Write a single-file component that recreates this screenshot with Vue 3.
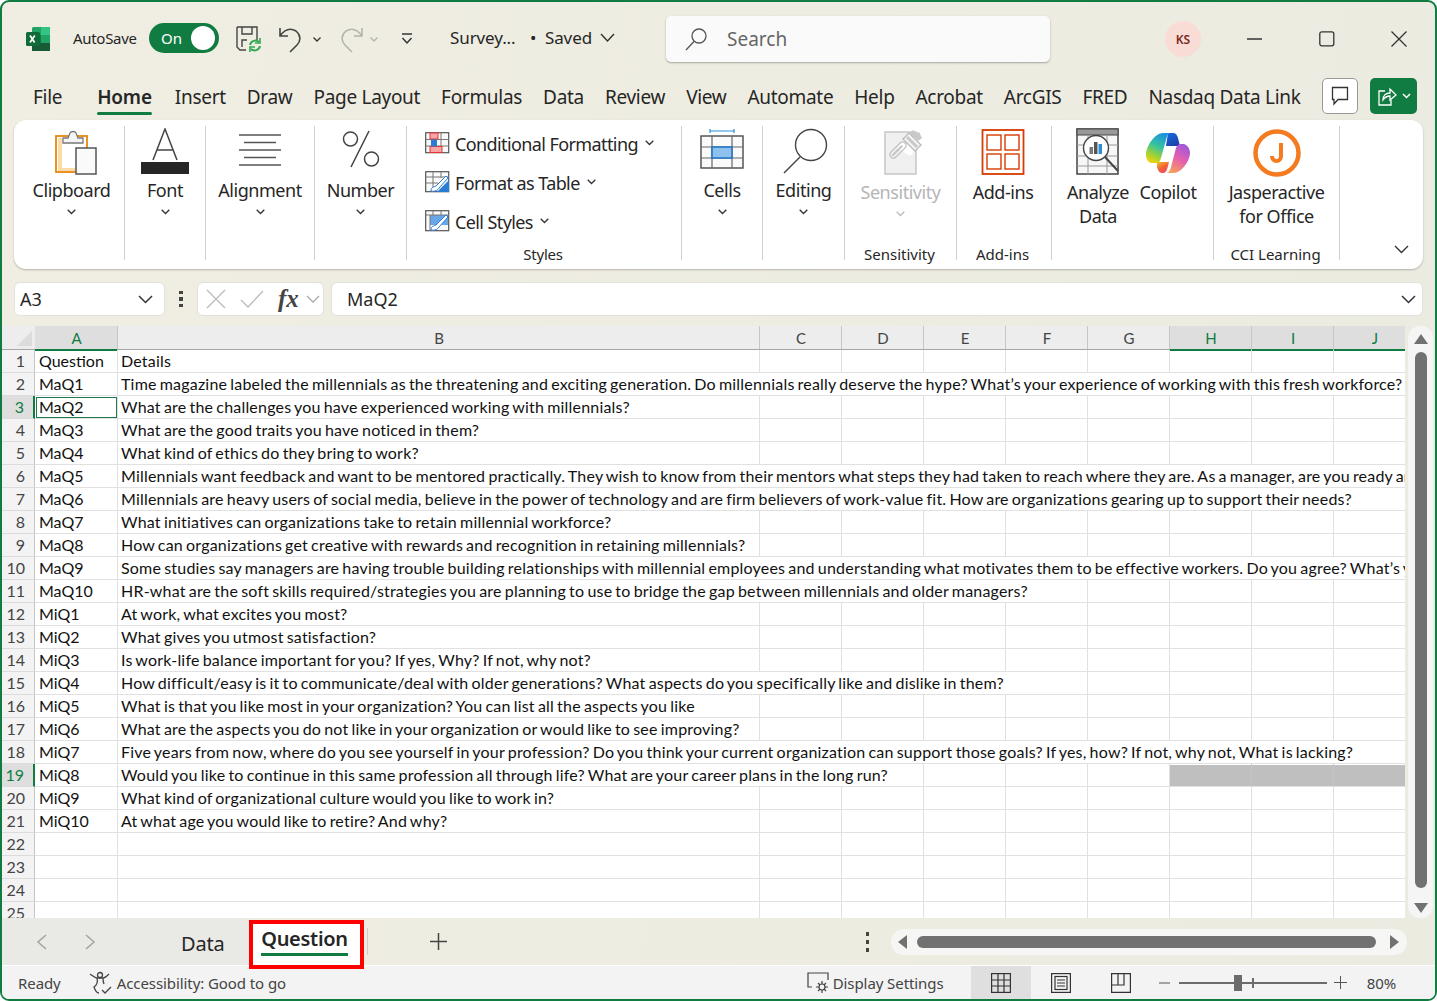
<script setup>
const tabs = ['File', 'Home', 'Insert', 'Draw', 'Page Layout', 'Formulas', 'Data', 'Review', 'View', 'Automate', 'Help', 'Acrobat', 'ArcGIS', 'FRED', 'Nasdaq Data Link']

const columns = ['C', 'D', 'E', 'F', 'G', 'H', 'I', 'J']
const selectedColumns = ['H', 'I', 'J']

// [label, details, how many columns the text runs over]
const data = [
  ['Question', 'Details', 0],
  ['MaQ1', 'Time magazine labeled the millennials as the threatening and exciting generation. Do millennials really deserve the hype? What’s your experience of working with this fresh workforce?', 8],
  ['MaQ2', 'What are the challenges you have experienced working with millennials?', 0],
  ['MaQ3', 'What are the good traits you have noticed in them?', 0],
  ['MaQ4', 'What kind of ethics do they bring to work?', 0],
  ['MaQ5', 'Millennials want feedback and want to be mentored practically. They wish to know from their mentors what steps they had taken to reach where they are. As a manager, are you ready and willing to mentor them?', 8],
  ['MaQ6', 'Millennials are heavy users of social media, believe in the power of technology and are firm believers of work-value fit. How are organizations gearing up to support their needs?', 8],
  ['MaQ7', 'What initiatives can organizations take to retain millennial workforce?', 0],
  ['MaQ8', 'How can organizations get creative with rewards and recognition in retaining millennials?', 0],
  ['MaQ9', 'Some studies say managers are having trouble building relationships with millennial employees and understanding what motivates them to be effective workers. Do you agree? What’s your opinion on this?', 8],
  ['MaQ10', 'HR-what are the soft skills required/strategies you are planning to use to bridge the gap between millennials and older managers?', 4],
  ['MiQ1', 'At work, what excites you most?', 0],
  ['MiQ2', 'What gives you utmost satisfaction?', 0],
  ['MiQ3', 'Is work-life balance important for you? If yes, Why? If not, why not?', 0],
  ['MiQ4', 'How difficult/easy is it to communicate/deal with older generations? What aspects do you specifically like and dislike in them?', 4],
  ['MiQ5', 'What is that you like most in your organization? You can list all the aspects you like', 0],
  ['MiQ6', 'What are the aspects you do not like in your organization or would like to see improving?', 0],
  ['MiQ7', 'Five years from now, where do you see yourself in your profession? Do you think your current organization can support those goals? If yes, how? If not, why not, What is lacking?', 8],
  ['MiQ8', 'Would you like to continue in this same profession all through life? What are your career plans in the long run?', 2],
  ['MiQ9', 'What kind of organizational culture would you like to work in?', 0],
  ['MiQ10', 'At what age you would like to retire? And why?', 0],
  ['', '', 0],
  ['', '', 0],
  ['', '', 0],
  ['', '', 0],
]

const rows = data.map((d, i) => ({
  n: i + 1,
  label: d[0],
  text: d[1],
  width: 642 + d[2] * 82,
  rest: columns.slice(d[2]),
}))
</script>

<template>
  <div class="window">
    <div class="titlebar">
      <svg class="logo" width="26" height="26" viewBox="0 0 26 26">
        <rect x="7" y="1" width="18" height="24" rx="1.5" fill="#21a366"/>
        <rect x="16" y="1" width="9" height="8" fill="#33c481"/>
        <rect x="7" y="9" width="9" height="8" fill="#107c41"/>
        <rect x="16" y="9" width="9" height="8" fill="#21a366"/>
        <rect x="7" y="17" width="18" height="8" fill="#185c37"/>
        <rect x="1" y="6" width="14" height="14" rx="1.5" fill="#0f6b37"/>
        <path d="M5 9.500l4.600 7M9.800 9.500l-4.800 7" stroke="#fff" stroke-width="1.700" fill="none"/>
      </svg>
      <span class="autosave">AutoSave</span>
      <div class="toggle"><span>On</span><i></i></div>
      <svg class="save" width="28" height="28" viewBox="0 0 28 28" fill="none">
        <path d="M2 2h20v13M2 2v20l3 3h6" stroke="#444" stroke-width="1.400"/>
        <path d="M7 2v7h10V2M7 22v-7h5" stroke="#444" stroke-width="1.400"/>
        <path d="M15 20a5.500 5.500 0 0 1 9-3M25 21a5.500 5.500 0 0 1-9 3" stroke="#2fa84f" stroke-width="2"/>
        <path d="M25 13v5h-5M15 27v-5h5" stroke="#2fa84f" stroke-width="1.600"/>
      </svg>
      <svg class="undo" width="26" height="28" viewBox="0 0 26 28" fill="none">
        <path d="M2 3v8h8M2 11C7 4 13 3 18 6c5 4 5 10 1 14l-7 7" stroke="#444" stroke-width="1.600"/>
      </svg>
      <svg class="chev c1" width="8" height="5" viewBox="0 0 8 5" fill="none"><path d="M.5.500L4 4 7.500.500" stroke="#333" stroke-width="1.300"/></svg>
      <svg class="redo" width="26" height="28" viewBox="0 0 26 28" fill="none">
        <path d="M24 3v8h-8M24 11C19 4 13 3 8 6c-5 4-5 10-1 14l7 7" stroke="#b4b4ae" stroke-width="1.600"/>
      </svg>
      <svg class="chev c2" width="8" height="5" viewBox="0 0 8 5" fill="none"><path d="M.5.500L4 4 7.500.500" stroke="#b4b4ae" stroke-width="1.300"/></svg>
      <svg class="custom" width="12" height="14" viewBox="0 0 12 14" fill="none">
        <path d="M1 2h10" stroke="#333" stroke-width="1.500"/><path d="M1.500 6L6 11l4.500-5" stroke="#333" stroke-width="1.500"/>
      </svg>
      <span class="doc">Survey...</span>
      <span class="saved">•&nbsp; Saved</span>
      <svg class="chev c3" width="15" height="9" viewBox="0 0 15 9" fill="none"><path d="M1 1l6.500 7L14 1" stroke="#333" stroke-width="1.400"/></svg>
      <div class="search">
        <svg width="24" height="24" viewBox="0 0 24 24" fill="none">
          <circle cx="15" cy="9" r="7" stroke="#555" stroke-width="1.300"/><path d="M10 14.500L2 23" stroke="#555" stroke-width="1.300"/>
        </svg>
        <span>Search</span>
      </div>
      <div class="avatar">KS</div>
      <svg class="win w1" width="16" height="16" viewBox="0 0 16 16"><path d="M0 8h15" stroke="#333" stroke-width="1.300"/></svg>
      <svg class="win w2" width="16" height="16" viewBox="0 0 16 16" fill="none"><rect x=".8" y=".8" width="14" height="14" rx="2" stroke="#333" stroke-width="1.300"/></svg>
      <svg class="win w3" width="16" height="16" viewBox="0 0 16 16" fill="none"><path d="M.5.500l15 15M15.500.500l-15 15" stroke="#333" stroke-width="1.300"/></svg>
    </div>

    <div class="tabs">
      <span v-for="t in tabs" :key="t" class="tab" :class="{ active: t === 'Home', file: t === 'File' }">{{ t }}</span>
      <div class="comment">
        <svg width="18" height="20" viewBox="0 0 18 20" fill="none">
          <path d="M1.500 1.500h15v12H7l-4 4.500v-4.500H1.500z" stroke="#333" stroke-width="1.300"/>
        </svg>
      </div>
      <div class="share">
        <svg width="20" height="22" viewBox="0 0 20 22" fill="none">
          <path d="M8 6H2v14h12v-5" stroke="#fff" stroke-width="1.300"/>
          <path d="M6 15c0-5 3-7 7-7V4l6 6-6 5v-4c-3 0-5 1-7 4z" stroke="#fff" stroke-width="1.300"/>
        </svg>
        <svg width="9" height="6" viewBox="0 0 9 6" fill="none"><path d="M1 1l3.500 3.500L8 1" stroke="#fff" stroke-width="1.500"/></svg>
      </div>
    </div>

    <div class="ribbon">
      <div class="group g-clip">
        <div class="big">
          <svg class="ic" width="44" height="48" viewBox="0 0 44 48" fill="none">
            <rect x="2" y="8" width="31" height="36" fill="#fff" stroke="#e8850c" stroke-width="1.800"/>
            <path d="M4 10h4v30h14v3H4z" fill="#fbdca8"/>
            <path d="M9 15V10h5l2-5c1-2 5-2 6 0l2 5h5v5z" fill="#f5f5f5" stroke="#777" stroke-width="1.300"/>
            <rect x="22" y="20" width="20" height="26" fill="#fafafa" stroke="#555" stroke-width="1.500"/>
          </svg>
          <span class="lbl">Clipboard</span>
          <svg class="cv" width="9" height="6" viewBox="0 0 9 6" fill="none"><path d="M.7.700l3.800 3.800L8.300.700" stroke="#333" stroke-width="1.300"/></svg>
        </div>
      </div>
      <div class="group g-font">
        <div class="big">
          <svg class="ic" width="48" height="48" viewBox="0 0 48 48" fill="none">
            <path d="M12 32L24 1l12 31M16 22h16" stroke="#444" stroke-width="1.500"/>
            <rect y="34" width="48" height="12" fill="#262626"/>
          </svg>
          <span class="lbl">Font</span>
          <svg class="cv" width="9" height="6" viewBox="0 0 9 6" fill="none"><path d="M.7.700l3.800 3.800L8.300.700" stroke="#333" stroke-width="1.300"/></svg>
        </div>
      </div>
      <div class="group g-align">
        <div class="big">
          <svg class="ic" width="44" height="48" viewBox="0 0 44 48" fill="none" stroke="#555" stroke-width="1.300">
            <path d="M1 7h42M6 14.500h32M1 22h42M6 29.500h32M1 37h42"/>
          </svg>
          <span class="lbl">Alignment</span>
          <svg class="cv" width="9" height="6" viewBox="0 0 9 6" fill="none"><path d="M.7.700l3.800 3.800L8.300.700" stroke="#333" stroke-width="1.300"/></svg>
        </div>
      </div>
      <div class="group g-num">
        <div class="big">
          <svg class="ic" width="40" height="48" viewBox="0 0 40 48" fill="none" stroke="#444" stroke-width="1.500">
            <circle cx="9.500" cy="11" r="7"/><circle cx="30.500" cy="31" r="7"/><path d="M28 3L10 39"/>
          </svg>
          <span class="lbl">Number</span>
          <svg class="cv" width="9" height="6" viewBox="0 0 9 6" fill="none"><path d="M.7.700l3.800 3.800L8.300.700" stroke="#333" stroke-width="1.300"/></svg>
        </div>
      </div>
      <div class="group g-styles">
        <div class="style-row">
          <svg width="25" height="22" viewBox="0 0 25 22" fill="none">
            <rect x=".7" y=".7" width="23" height="20" stroke="#555" stroke-width="1.200" fill="#fafafa"/>
            <path d="M8 1v20M16 1v20M1 7.500h23M1 14h23" stroke="#777"/>
            <rect x="5" y="1" width="8" height="6" fill="#f7a5a5" stroke="#e33" />
            <rect x="5" y="14.500" width="12" height="6" fill="#f7a5a5" stroke="#e33"/>
            <rect x="6" y="7.500" width="6" height="7" fill="#2b7cd3"/>
          </svg>
          <span>Conditional Formatting</span>
          <svg width="9" height="6" viewBox="0 0 9 6" fill="none"><path d="M.7.700l3.800 3.800L8.300.700" stroke="#333" stroke-width="1.300"/></svg>
        </div>
        <div class="style-row">
          <svg width="25" height="22" viewBox="0 0 25 22" fill="none">
            <rect x=".7" y=".7" width="23" height="20" stroke="#555" stroke-width="1.200" fill="#fafafa"/>
            <path d="M1 6h23M1 12h12M8 1v20M16 1v6" stroke="#777"/>
            <path d="M12 21l12-12v12z" fill="#2b7cd3"/>
            <path d="M6 20c0-4 3-4 5-5l10-10 2 2-9 10c-1 2-4 4-8 3z" fill="#fff" stroke="#2b7cd3"/>
          </svg>
          <span>Format as Table</span>
          <svg width="9" height="6" viewBox="0 0 9 6" fill="none"><path d="M.7.700l3.800 3.800L8.300.700" stroke="#333" stroke-width="1.300"/></svg>
        </div>
        <div class="style-row">
          <svg width="25" height="22" viewBox="0 0 25 22" fill="none">
            <rect x=".7" y=".7" width="23" height="20" stroke="#555" stroke-width="1.200" fill="#fafafa"/>
            <rect x="5" y="5" width="18" height="10" fill="#69a6e6"/>
            <path d="M8 1v4M16 1v4M1 5h23M5 5v16" stroke="#777"/>
            <path d="M6 20c0-4 3-4 5-5l10-10 2 2-9 10c-1 2-4 4-8 3z" fill="#fff" stroke="#2b7cd3"/>
          </svg>
          <span>Cell Styles</span>
          <svg width="9" height="6" viewBox="0 0 9 6" fill="none"><path d="M.7.700l3.800 3.800L8.300.700" stroke="#333" stroke-width="1.300"/></svg>
        </div>
        <div class="caption">Styles</div>
      </div>
      <div class="group g-cells">
        <div class="big">
          <svg class="ic" width="44" height="48" viewBox="0 0 44 48" fill="none">
            <path d="M10 3h24M10 1v4M34 1v4" stroke="#2b8fd8" stroke-width="1.200"/>
            <rect x="1" y="8" width="42" height="32" fill="#fafafa" stroke="#555" stroke-width="1.500"/>
            <path d="M12 8v32M32 8v32M1 19h42M1 30h42" stroke="#666" stroke-width="1.200"/>
            <rect x="12" y="19" width="20" height="11" fill="#8fc1ef" stroke="#1f73c4" stroke-width="1.500"/>
          </svg>
          <span class="lbl">Cells</span>
          <svg class="cv" width="9" height="6" viewBox="0 0 9 6" fill="none"><path d="M.7.700l3.800 3.800L8.300.700" stroke="#333" stroke-width="1.300"/></svg>
        </div>
      </div>
      <div class="group g-edit">
        <div class="big">
          <svg class="ic" width="48" height="48" viewBox="0 0 48 48" fill="none" stroke="#444" stroke-width="1.400">
            <circle cx="31" cy="17" r="15.500"/><path d="M20 29L4 45"/>
          </svg>
          <span class="lbl">Editing</span>
          <svg class="cv" width="9" height="6" viewBox="0 0 9 6" fill="none"><path d="M.7.700l3.800 3.800L8.300.700" stroke="#333" stroke-width="1.300"/></svg>
        </div>
      </div>
      <div class="group g-sens">
        <div class="big tall">
          <svg class="ic" width="44" height="48" viewBox="0 0 44 48" fill="none">
            <rect x="6" y="4" width="31" height="42" fill="#f0f0f0" stroke="#c6c6c6" stroke-width="1.500"/>
            <path d="M18 20L32 3l12 10-13 15z" fill="#fff"/>
            <rect x="-10" y="-3.500" width="20" height="7" rx="3.500" transform="translate(19 22) rotate(-45)" stroke="#c2c2c2" stroke-width="1.400"/>
            <rect x="-8" y="-1" width="14" height="2" transform="translate(19 22) rotate(-45)" fill="#c2c2c2"/>
            <path d="M24 11l6-6 12 12-6 6z" fill="#f4f4f4" stroke="#bcbcbc" stroke-width="1.400"/>
            <path d="M30 5l4-3 3 3 3-1 3 6-4 3-3-3z" fill="#c8c8c8"/>
            <path d="M28 9l10 10" stroke="#c8c8c8" stroke-width="3"/>
          </svg>
          <span class="lbl off">Sensitivity</span>
          <svg class="cv" width="9" height="6" viewBox="0 0 9 6" fill="none"><path d="M.7.700l3.800 3.800L8.300.700" stroke="#bbb" stroke-width="1.300"/></svg>
        </div>
        <div class="caption">Sensitivity</div>
      </div>
      <div class="group g-add">
        <div class="big tall">
          <svg class="ic" width="44" height="48" viewBox="0 0 44 48" fill="none" stroke="#d83b01" stroke-width="1.400">
            <rect x="1.500" y="2" width="41" height="44" stroke-width="1.800"/>
            <rect x="6" y="7" width="14" height="15"/><rect x="24" y="7" width="14" height="15"/>
            <rect x="6" y="26" width="14" height="15"/><rect x="24" y="26" width="14" height="15"/>
          </svg>
          <span class="lbl">Add-ins</span>
        </div>
        <div class="caption">Add-ins</div>
      </div>
      <div class="group g-ai">
        <div class="big tall analyze">
          <svg class="ic" width="44" height="48" viewBox="0 0 44 48" fill="none">
            <rect x="1" y="1" width="41" height="45" fill="#f7f7f7" stroke="#444" stroke-width="1.500"/>
            <rect x="1" y="1" width="41" height="6" fill="#999" stroke="#444"/>
            <path d="M1 17h41M1 28h41M1 38h41M12 7v39M31 7v39" stroke="#999"/>
            <circle cx="20" cy="20" r="12.500" fill="#fff" stroke="#444" stroke-width="1.400"/>
            <path d="M29 29l13 14" stroke="#444" stroke-width="2"/>
            <rect x="13.500" y="19" width="3.500" height="7" fill="#777"/>
            <rect x="18" y="14" width="3.500" height="12" fill="#555"/>
            <rect x="22.500" y="16" width="3.500" height="10" fill="#2b8fd8"/>
          </svg>
          <span class="lbl">Analyze</span>
          <span class="lbl second">Data</span>
        </div>
        <div class="big tall copilot">
          <svg class="ic" width="46" height="48" viewBox="0 0 46 48" fill="none">
            <defs>
              <linearGradient id="cpa" x1="0.700" y1="0" x2="0.300" y2="1">
                <stop offset="0" stop-color="#1a8fe3"/><stop offset="0.450" stop-color="#35c2a0"/><stop offset="0.800" stop-color="#a9d32f"/><stop offset="1" stop-color="#f0d20e"/>
              </linearGradient>
              <linearGradient id="cpb" x1="0.800" y1="0" x2="0.300" y2="1">
                <stop offset="0" stop-color="#9a58dc"/><stop offset="0.500" stop-color="#e45fb0"/><stop offset="1" stop-color="#f8a05a"/>
              </linearGradient>
              <linearGradient id="cpc" x1="0.300" y1="0" x2="0.800" y2="1">
                <stop offset="0" stop-color="#1668d8"/><stop offset="1" stop-color="#1c3fa8"/>
              </linearGradient>
              <linearGradient id="cpd" x1="0.200" y1="0" x2="0.800" y2="1">
                <stop offset="0" stop-color="#f2b21f"/><stop offset="0.500" stop-color="#f2603c"/><stop offset="1" stop-color="#ea4a6a"/>
              </linearGradient>
            </defs>
            <path d="M23 5h5c3 0 4 2 5 5l2 8H21z" fill="url(#cpc)"/>
            <path d="M12 34h12l-1 4c-1 4-2 7-5 7h-1c-3 0-4-3-5-6z" fill="url(#cpd)"/>
            <path d="M18 5h8c-3 0-4 3-5 7l-5 18c-1 3-2 5-4 5H6c-3-1-5-4-5-8C1 18 10 5 18 5z" fill="url(#cpa)"/>
            <path d="M29 45h-8c3 0 4-3 5-6l5-19c1-3 3-4 5-4h3c3 1 6 4 6 9 0 8-9 20-16 20z" fill="url(#cpb)"/>
          </svg>
          <span class="lbl">Copilot</span>
        </div>
      </div>
      <div class="group g-jasper">
        <div class="big tall">
          <svg class="ic" width="50" height="50" viewBox="0 0 50 50" fill="none">
            <circle cx="25" cy="25" r="21.500" stroke="#f47b20" stroke-width="4.500"/>
            <path d="M29 15v13c0 3-2 5-4.500 5S20 31 20 28" stroke="#f47b20" stroke-width="4"/>
          </svg>
          <span class="lbl">Jasperactive</span>
          <span class="lbl second">for Office</span>
        </div>
        <div class="caption">CCI Learning</div>
      </div>
      <svg class="collapse" width="15" height="9" viewBox="0 0 15 9" fill="none"><path d="M1 1l6.500 6.500L14 1" stroke="#333" stroke-width="1.400"/></svg>
    </div>

    <div class="formula">
      <div class="namebox">
        <span>A3</span>
        <svg width="15" height="9" viewBox="0 0 15 9" fill="none"><path d="M1 1l6.500 6.500L14 1" stroke="#333" stroke-width="1.500"/></svg>
      </div>
      <div class="dots"><i></i><i></i><i></i></div>
      <div class="fxbox">
        <svg width="20" height="20" viewBox="0 0 20 20" fill="none"><path d="M1 1l18 18M19 1L1 19" stroke="#bdbdbd" stroke-width="1.400"/></svg>
        <svg class="check" width="24" height="18" viewBox="0 0 24 18" fill="none"><path d="M1 10l7 7L23 1" stroke="#bdbdbd" stroke-width="1.400"/></svg>
        <span class="fx">fx</span>
        <svg class="fxv" width="14" height="8" viewBox="0 0 14 8" fill="none"><path d="M1 1l6 6 6-6" stroke="#aaa" stroke-width="1.300"/></svg>
      </div>
      <div class="input">
        <span>MaQ2</span>
        <svg width="15" height="9" viewBox="0 0 15 9" fill="none"><path d="M1 1l6.500 6.500L14 1" stroke="#333" stroke-width="1.500"/></svg>
      </div>
    </div>

    <div class="sheet">
      <div class="grid">
        <div class="head">
          <div class="corner"><i></i></div>
          <div class="ch a on">A</div>
          <div class="ch b">B</div>
          <div v-for="c in columns" :key="c" class="ch" :class="{ on: selectedColumns.includes(c) }">{{ c }}</div>
        </div>
        <div v-for="row in rows" :key="row.n" class="row">
          <div class="rh" :class="{ on: row.n === 3 || row.n === 19 }">{{ row.n }}</div>
          <div class="cell a" :class="{ current: row.n === 3 }">{{ row.label }}</div>
          <div class="cell b" :style="{ width: row.width + 'px' }">{{ row.text }}</div>
          <div v-for="c in row.rest" :key="c" class="cell" :class="{ filled: row.n === 19 && selectedColumns.includes(c) }"></div>
        </div>
      </div>
      <div class="vscroll">
        <i class="up"></i>
        <div class="thumb"></div>
        <i class="down"></i>
      </div>
    </div>

    <div class="sheetbar">
      <div class="left">
        <svg width="11" height="16" viewBox="0 0 11 16" fill="none"><path d="M10 1L2 8l8 7" stroke="#a5a5a5" stroke-width="1.600"/></svg>
        <svg class="next" width="11" height="16" viewBox="0 0 11 16" fill="none"><path d="M1 1l8 7-8 7" stroke="#a5a5a5" stroke-width="1.600"/></svg>
        <span class="data-tab">Data</span>
      </div>
      <div class="current-tab"><span>Question</span></div>
      <i class="tab-sep"></i>
      <svg class="plus" width="17" height="17" viewBox="0 0 17 17"><path d="M8.500 0v17M0 8.500h17" stroke="#444" stroke-width="1.500"/></svg>
      <div class="dots small"><i></i><i></i><i></i></div>
      <div class="hscroll">
        <i class="l"></i>
        <div class="thumb"></div>
        <i class="r"></i>
      </div>
    </div>

    <div class="status">
      <span>Ready</span>
      <svg class="acc" width="24" height="24" viewBox="0 0 24 24" fill="none" stroke="#444" stroke-width="1.300">
        <circle cx="11" cy="4" r="2.500"/>
        <path d="M1 3c3 2 5 4 7 4h6c2 0 4-2 6-4M8 7c1 4 0 7-3 9 1 3 3 6 5 6M14 7c0 2 0 4 1 6"/>
        <path d="M13 19l3 3 6-6"/>
      </svg>
      <span class="acc-text">Accessibility: Good to go</span>
      <svg class="disp" width="24" height="24" viewBox="0 0 24 24" fill="none" stroke="#444" stroke-width="1.200">
        <path d="M5 16H1V2h20v7"/>
        <circle cx="15" cy="16" r="3"/>
        <path d="M15 10v3M15 19v3M9 16h3M18 16h3M11 12l2 2M17 18l2 2M19 12l-2 2M13 18l-2 2"/>
      </svg>
      <span class="disp-text">Display Settings</span>
      <div class="view on">
        <svg width="20" height="20" viewBox="0 0 20 20" fill="none" stroke="#333" stroke-width="1.200">
          <rect x=".6" y=".6" width="18.800" height="18.800"/><path d="M7 1v18M13 1v18M1 7h18M1 13h18"/>
        </svg>
      </div>
      <div class="view">
        <svg width="20" height="20" viewBox="0 0 20 20" fill="none" stroke="#333" stroke-width="1.200">
          <rect x=".6" y=".6" width="18.800" height="18.800"/><rect x="4" y="3.500" width="12" height="13"/><path d="M6 7h8M6 10h8M6 13h8"/>
        </svg>
      </div>
      <div class="view">
        <svg width="20" height="20" viewBox="0 0 20 20" fill="none" stroke="#333" stroke-width="1.200">
          <path d="M.6.600h18.800v18.800H.6zM.6 12H13V.600M7 .600V12"/>
        </svg>
      </div>
      <div class="zoom">
        <svg width="11" height="2" viewBox="0 0 11 2"><path d="M0 1h11" stroke="#555"/></svg>
        <div class="slider"><i class="tick"></i><i class="knob"></i></div>
        <svg width="13" height="13" viewBox="0 0 13 13"><path d="M6.500 0v13M0 6.500h13" stroke="#555"/></svg>
        <span>80%</span>
      </div>
    </div>
  </div>
</template>

<style scoped>
.window {
  box-sizing: border-box;
  width: 1437px;
  height: 1001px;
  display: flex;
  flex-direction: column;
  overflow: hidden;
  border: 2px solid #107c41;
  border-radius: 9px;
  background: linear-gradient(100deg, #f0eee2, #ecebe1);
  font-family: "Noto Sans", "Open Sans", sans-serif;
  color: #262626;
}

.titlebar {
  height: 74px;
  flex: none;
  display: flex;
  align-items: center;
  font-size: 16px;
}

.logo { margin-left: 23px; }
.autosave { margin: -3px 0 0 22px; width: 66px; font-size: 15px; letter-spacing: -.3px; white-space: nowrap; }

.toggle {
  margin: -2px 0 0 10px;
  width: 70px;
  height: 30px;
  box-sizing: border-box;
  padding: 0 4px 0 12px;
  border-radius: 15px;
  background: #107c41;
  color: #fff;
  display: flex;
  align-items: center;
  justify-content: space-between;
  font-size: 15px;
}
.toggle i { width: 24px; height: 24px; border-radius: 50%; background: #fff; }

.save { margin-left: 16px; }
.undo { margin-left: 15px; }
.c1 { margin-left: 9px; }
.redo { margin-left: 17px; }
.c2 { margin-left: 6px; }
.custom { margin-left: 23px; }
.doc { margin: -3px 0 0 37px; width: 66px; font-size: 17px; letter-spacing: -.1px; white-space: nowrap; }
.saved { margin: -3px 0 0 14px; width: 63px; font-size: 17px; letter-spacing: -.1px; white-space: nowrap; }
.c3 { margin: -3px 0 0 7px; }

.search {
  margin-left: 51px;
  width: 384px;
  height: 46px;
  box-sizing: border-box;
  padding-left: 18px;
  display: flex;
  align-items: center;
  gap: 19px;
  background: #fafafa;
  border-radius: 5px;
  box-shadow: 0 1px 2px rgba(0, 0, 0, .3);
  color: #666;
  font-size: 19px;
}

.avatar {
  margin-left: 115px;
  width: 36px;
  height: 36px;
  border-radius: 50%;
  background: #f9dcd6;
  color: #7a2a20;
  font-size: 12px;
  font-weight: 600;
  display: flex;
  align-items: center;
  justify-content: center;
}
.w1 { margin-left: 46px; }
.w2 { margin-left: 56px; }
.w3 { margin-left: 56px; }

.tabs {
  height: 44px;
  flex: none;
  display: flex;
  align-items: center;
  font-size: 19px;
  letter-spacing: -.3px;
  padding: 0 18px 0 31px;
}
.tab {
  position: relative;
  margin-top: -2px;
  margin-right: 21px;
  white-space: nowrap;
  line-height: 36px;
}
.tab.file { margin-right: 35px; }
.tab.active { font-weight: 600; letter-spacing: -.2px; margin-right: 23px; }
.tab.active::after {
  content: "";
  position: absolute;
  left: 0;
  right: 0;
  bottom: 0;
  height: 3px;
  border-radius: 2px;
  background: #107c41;
}

.comment {
  margin: -4px 0 0 auto;
  width: 36px;
  height: 36px;
  box-sizing: border-box;
  border: 1px solid #999;
  border-radius: 5px;
  background: #fff;
  display: flex;
  align-items: center;
  justify-content: center;
}
.share {
  margin: -4px 0 0 12px;
  width: 47px;
  height: 36px;
  border-radius: 5px;
  background: #107c41;
  display: flex;
  align-items: center;
  justify-content: center;
  gap: 5px;
}

.ribbon {
  position: relative;
  margin: 0 12px;
  height: 149px;
  flex: none;
  display: flex;
  background: #fff;
  border-radius: 12px;
  box-shadow: 0 1px 2px rgba(0, 0, 0, .25);
}
.group {
  position: relative;
  box-sizing: border-box;
  margin-top: 6px;
  height: 134px;
  border-right: 1px solid #d0d0d0;
  flex: none;
}
.g-clip { width: 111px; }
.g-clip .big { padding-left: 5px; }
.g-clip .ic { margin-left: 8px; }
.g-font { width: 81px; }
.g-align { width: 109px; }
.g-num { width: 92px; }
.g-styles { width: 275px; padding: 6px 0 0 18px; }
.g-cells { width: 81px; }
.g-edit { width: 82px; }
.g-sens { width: 112px; }
.g-add { width: 95px; }
.g-add .big { padding-right: 2px; }
.g-ai { width: 162px; display: flex; padding-left: 8px; }
.g-jasper { width: 126px; }

.big {
  display: flex;
  flex-direction: column;
  align-items: center;
  padding-top: 2px;
}
.ic { display: block; flex: none; }
.lbl { margin-top: 2px; font-size: 18px; line-height: 24px; letter-spacing: -.45px; white-space: nowrap; }
.lbl.off { color: #b5b5b5; }
.lbl.second { margin-top: 0; }
.big.tall { padding-top: 2px; }
.big.tall .lbl { margin-top: 4px; }
.big.tall .lbl.second { margin-top: 0; }
.g-jasper .big.tall .lbl { margin-top: 2px; }
.g-jasper .big.tall .lbl.second { margin-top: 0; }
.cv { margin-top: 7px; }
.analyze { width: 76px; }
.copilot { width: 66px; margin-left: -1px; }

.style-row {
  height: 39px;
  display: flex;
  align-items: flex-start;
  gap: 5px;
  font-size: 18px;
  letter-spacing: -.6px;
  line-height: 24px;
  white-space: nowrap;
}
.style-row svg:last-child { margin: 8px 0 0 2px; }
.caption {
  position: absolute;
  left: 0;
  right: 0;
  bottom: -4px;
  text-align: center;
  font-size: 15px;
  line-height: 20px;
}
.g-sens .caption { padding-right: 2px; }
.g-add .caption { padding-right: 3px; }
.g-jasper .caption { padding-right: 2px; }
.g-styles .caption { padding-right: 2px; letter-spacing: -.2px; }
.collapse { position: absolute; right: 14px; top: 125px; }

.formula {
  margin-top: 13px;
  padding: 0 12px;
  height: 34px;
  flex: none;
  display: flex;
  align-items: stretch;
}
.namebox,
.fxbox,
.input {
  box-sizing: border-box;
  background: #fff;
  border: 1px solid #e2e2dc;
  border-radius: 6px;
  display: flex;
  align-items: center;
}
.namebox {
  width: 151px;
  padding: 0 11px 0 5px;
  justify-content: space-between;
  font-size: 18px;
}
.dots {
  width: 32px;
  display: flex;
  flex-direction: column;
  align-items: center;
  justify-content: center;
  gap: 3px;
}
.dots i { width: 3.500px; height: 3.500px; background: #444; }
.fxbox {
  width: 127px;
  padding-left: 8px;
}
.check { margin-left: 14px; }
.fx {
  margin-left: 14px;
  font-family: "Liberation Serif", serif;
  font-style: italic;
  font-weight: 700;
  font-size: 25px;
  line-height: 24px;
  color: #444;
}
.fxv { margin-left: 7px; }
.input {
  margin-left: 7px;
  flex: 1;
  padding: 0 6px 0 15px;
  justify-content: space-between;
  font-size: 18px;
}

.sheet {
  margin-top: 10px;
  height: 592px;
  flex: none;
  display: flex;
}
.grid {
  width: 1403px;
  overflow: hidden;
  background: #fff;
  font-family: "Lato", "Noto Sans", sans-serif;
}
.head {
  height: 24px;
  display: flex;
  background: #ecedec;
  border-bottom: 1px solid #a6a6a6;
  box-sizing: border-box;
  color: #444;
  font-size: 15px;
}
.corner {
  position: relative;
  width: 33px;
  flex: none;
}
.corner i {
  position: absolute;
  right: 3px;
  bottom: 3px;
  border-style: solid;
  border-width: 0 0 15px 15px;
  border-color: transparent transparent #dcdcdc transparent;
}
.ch {
  box-sizing: border-box;
  width: 82px;
  flex: none;
  padding-left: 1px;
  text-align: center;
  line-height: 25px;
  border-right: 1px solid #c6c6c6;
}
.ch.a { width: 83px; }
.ch.b { width: 642px; }
.ch.on {
  height: 25px;
  background: #dedede;
  color: #107c41;
  border-bottom: 2px solid #107c41;
}

.row { display: flex; height: 23px; box-sizing: border-box; }
.rh {
  box-sizing: border-box;
  width: 33px;
  flex: none;
  padding-right: 9px;
  text-align: right;
  background: #f3f3f3;
  color: #444;
  font-size: 16px;
  line-height: 22px;
  border-bottom: 1px solid #dcdcdc;
  border-right: 1px solid #c6c6c6;
}
.rh.on {
  background: #dedede;
  color: #107c41;
  border-right: 2px solid #107c41;
}
.cell {
  box-sizing: border-box;
  width: 82px;
  flex: none;
  padding-left: 3px;
  color: #111;
  font-size: 16px;
  line-height: 22px;
  letter-spacing: .2px;
  word-spacing: -1.200px;
  white-space: nowrap;
  overflow: hidden;
  border-right: 1px solid #e1e1e1;
  border-bottom: 1px solid #e1e1e1;
}
.cell.a { width: 83px; padding-left: 4px; letter-spacing: 0; }
.cell.current { outline: 1px solid #1e7a4c; outline-offset: -2px; }
.cell.filled { background: #bfbfbf; border-right-color: #c4c4c4; box-shadow: inset 0 1px 0 #fff; }

.vscroll {
  position: relative;
  margin-left: 3px;
  width: 25px;
  border-radius: 12px;
  background: #f5f5f5;
}
.vscroll .thumb {
  position: absolute;
  left: 7px;
  top: 26px;
  width: 12px;
  height: 536px;
  border-radius: 6px;
  background: #717171;
}
.vscroll i { position: absolute; left: 6px; border-style: solid; border-color: transparent; }
.vscroll .up { top: 8px; border-width: 0 7px 10px; border-bottom-color: #717171; }
.vscroll .down { bottom: 5px; border-width: 10px 7px 0; border-top-color: #717171; }

.sheetbar {
  height: 47px;
  flex: none;
  display: flex;
  align-items: center;
}
.left {
  width: 247px;
  height: 47px;
  flex: none;
  box-sizing: border-box;
  padding-left: 34px;
  display: flex;
  align-items: center;
  background: #e9e9e6;
}
.next { margin-left: 38px; }
.data-tab { margin-left: 85px; margin-top: 3px; font-size: 20px; letter-spacing: -.2px; }
.current-tab {
  align-self: flex-start;
  margin-top: 2px;
  width: 115px;
  height: 49px;
  flex: none;
  box-sizing: border-box;
  border: 4px solid #f00;
  padding-right: 4px;
  background: #fff;
  text-align: center;
  position: relative;
  z-index: 1;
}
.current-tab span {
  display: inline-block;
  font-size: 20px;
  font-weight: 600;
  line-height: 29px;
  letter-spacing: -.3px;
  border-bottom: 3px solid #107c41;
}
.tab-sep { margin-left: 3px; width: 1px; height: 27px; background: #ccc; }
.plus { margin-left: 62px; }
.dots.small { width: 6px; margin-left: 417px; gap: 4px; }
.dots.small i { width: 3px; height: 4px; }
.hscroll {
  position: relative;
  margin-left: 21px;
  width: 516px;
  height: 26px;
  border-radius: 13px;
  background: #f6f6f4;
}
.hscroll .thumb {
  position: absolute;
  left: 26px;
  top: 7px;
  width: 459px;
  height: 12px;
  border-radius: 6px;
  background: #717171;
}
.hscroll i { position: absolute; top: 6px; border-style: solid; border-color: transparent; }
.hscroll .l { left: 7px; border-width: 7px 9px 7px 0; border-right-color: #717171; }
.hscroll .r { right: 8px; border-width: 7px 0 7px 9px; border-left-color: #717171; }

.status {
  flex: 1;
  display: flex;
  align-items: center;
  padding-left: 16px;
  background: #f3f3f3;
  border-top: 1px solid #fff;
  font-size: 15px;
  letter-spacing: -.08px;
  color: #444;
  white-space: nowrap;
}
.acc { margin-left: 28px; }
.acc-text { margin-left: 4px; width: 690px; flex: none; }
.disp-text { margin-left: 2px; width: 138px; flex: none; }
.disp { margin-left: 0; }
.view {
  width: 60px;
  height: 100%;
  flex: none;
  display: flex;
  align-items: center;
  justify-content: center;
}
.view.on { background: #dfdfdf; }
.zoom {
  display: flex;
  align-items: center;
  margin-left: 8px;
}
.slider { position: relative; margin: 0 7px 0 9px; width: 148px; height: 2px; background: #6b6b6b; }
.slider .knob { position: absolute; left: 55px; top: -7px; width: 8px; height: 16px; background: #6b6b6b; }
.slider .tick { position: absolute; left: 73px; top: -4px; width: 2px; height: 10px; background: #6b6b6b; }
.zoom span { margin-left: 20px; }
</style>

<style>
html, body { margin: 0; background: #fff; }
</style>
